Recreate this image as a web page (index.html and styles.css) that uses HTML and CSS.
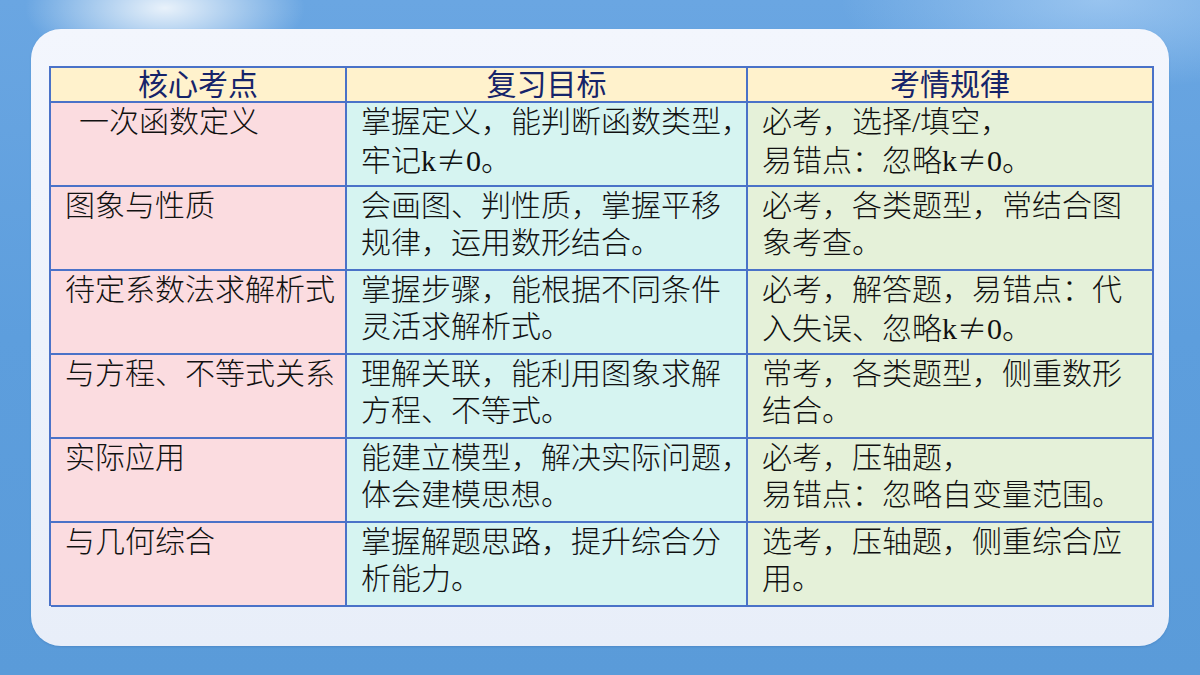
FILE: index.html
```html
<!DOCTYPE html>
<html lang="zh">
<head>
<meta charset="utf-8">
<title>一次函数复习</title>
<link rel="stylesheet" href="styles.css">
</head>
<body>
<div class="stage">
  <div class="card">
    <div class="table">
      <div class="cell head">核心考点</div>
      <div class="cell head">复习目标</div>
      <div class="cell head">考情规律</div>

      <div class="cell c1 indent">一次函数定义</div>
      <div class="cell c2">掌握定义，能判断函数类型，<br>牢记k<span class="sym">≠</span>0。</div>
      <div class="cell c3">必考，选择/填空，<br>易错点：忽略k<span class="sym">≠</span>0。</div>

      <div class="cell c1">图象与性质</div>
      <div class="cell c2">会画图、判性质，掌握平移<br>规律，运用数形结合。</div>
      <div class="cell c3">必考，各类题型，常结合图<br>象考查。</div>

      <div class="cell c1">待定系数法求解析式</div>
      <div class="cell c2">掌握步骤，能根据不同条件<br>灵活求解析式。</div>
      <div class="cell c3">必考，解答题，易错点：代<br>入失误、忽略k<span class="sym">≠</span>0。</div>

      <div class="cell c1">与方程、不等式关系</div>
      <div class="cell c2">理解关联，能利用图象求解<br>方程、不等式。</div>
      <div class="cell c3">常考，各类题型，侧重数形<br>结合。</div>

      <div class="cell c1">实际应用</div>
      <div class="cell c2">能建立模型，解决实际问题，<br>体会建模思想。</div>
      <div class="cell c3">必考，压轴题，<br>易错点：忽略自变量范围。</div>

      <div class="cell c1">与几何综合</div>
      <div class="cell c2">掌握解题思路，提升综合分<br>析能力。</div>
      <div class="cell c3">选考，压轴题，侧重综合应<br>用。</div>
    </div>
  </div>
</div>
</body>
</html>
```

FILE: styles.css
```css
html, body {
  margin: 0;
  padding: 0;
}
body {
  width: 1200px;
  height: 675px;
  overflow: hidden;
  font-family: "Liberation Serif", "Noto Sans CJK SC", serif;
}
.stage {
  width: 1200px;
  height: 675px;
  box-sizing: border-box;
  padding: 29px 31px 29px 31px;
  background:
    radial-gradient(ellipse 140px 60px at 165px 8px, rgba(255,255,255,0.85), rgba(255,255,255,0) 100%),
    radial-gradient(ellipse 260px 90px at 1100px 0px, rgba(190,220,250,0.55), rgba(190,220,250,0) 100%),
    linear-gradient(180deg, #6aa6e2 0%, #5d9edd 50%, #5a9bd9 100%);
}
.card {
  height: 617px;
  box-sizing: border-box;
  border-radius: 30px;
  background: linear-gradient(180deg, #f3f6fd 0%, #edf2fb 50%, #e8eef9 100%);
  padding: 37px 15px 0 18px;
  box-shadow: 0 1px 2px rgba(40, 90, 160, 0.25);
}
.table {
  display: grid;
  grid-template-columns: 296px 401px 1fr;
  grid-template-rows: 35px repeat(6, 84px);
  border-top: 2px solid #4a72c8;
  border-left: 2px solid #4a72c8;
  box-sizing: border-box;
  height: 540px;
}
.cell {
  border-right: 2px solid #4a72c8;
  border-bottom: 2px solid #4a72c8;
  font-size: 30px;
  line-height: 37px;
  color: #111;
  font-weight: 300;
  padding: 0 0 0 14px;
  white-space: nowrap;
}
.sym {
  font-family: "Noto Sans CJK SC", sans-serif;
}
.head {
  background: #fff2cc;
  color: #16246a;
  font-weight: 400;
  text-align: center;
  line-height: 33px;
  padding: 0;
}
.c1 {
  background: #fbdce0;
}
.c2 {
  background: #d6f4f1;
}
.c3 {
  background: #e5f1d9;
}
.indent {
  text-indent: 14px;
}
```
